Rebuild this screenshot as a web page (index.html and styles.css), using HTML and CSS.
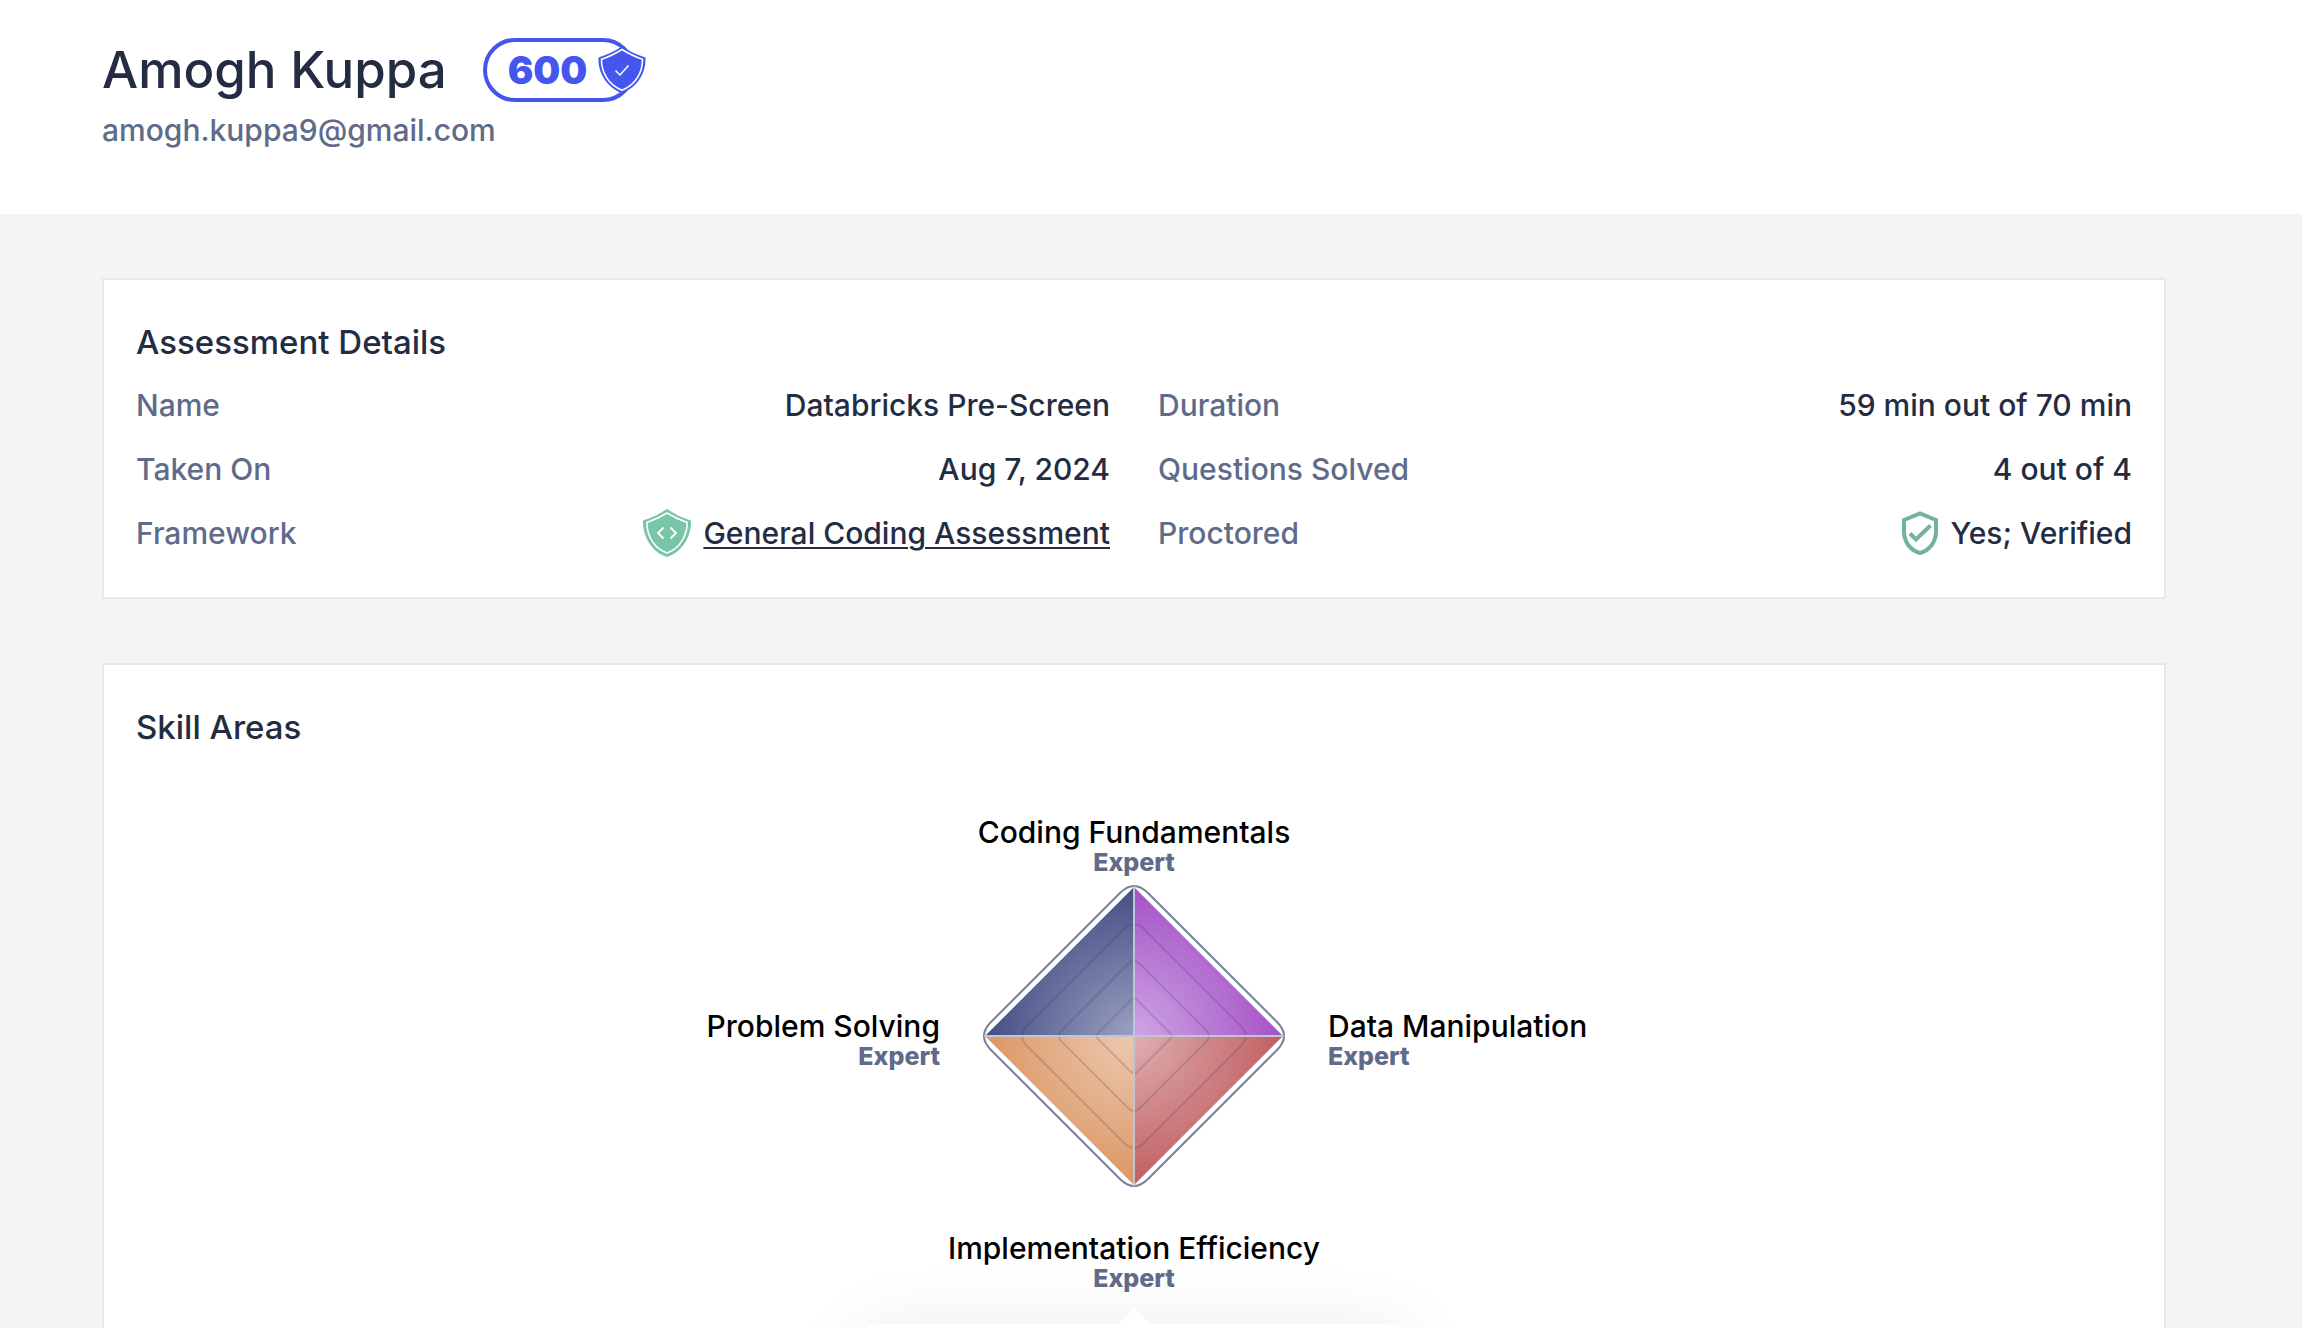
FILE: index.html
```html
<!DOCTYPE html>
<html lang="en">
<head>
<meta charset="utf-8">
<title>Amogh Kuppa - Assessment Result</title>
<link rel="stylesheet" href="styles.css">
</head>
<body>
<div class="page">
  <header class="profile">
    <div class="profile-row">
      <h1 class="profile-name">Amogh Kuppa</h1>
      <div class="score">
        <span class="score-value">600</span>
        <svg class="score-shield" viewBox="0 0 48 48" aria-hidden="true">
          <path d="M24 0.500C31 5 39 9 47.500 11.500C48.500 26 40 41 24 47.500C8 41 -0.500 26 0.500 11.500C9 9 17 5 24 0.500Z" fill="#4456ee"/>
          <path d="M24 3.500C30.500 7.500 37.500 11 44.500 13.300C44.700 26 38 38.500 24 44.300C10 38.500 3.300 26 3.500 13.300C10.500 11 17.500 7.500 24 3.500Z" fill="none" stroke="#fff" stroke-width="1.600"/>
          <path d="M17.500 24.500L22 29L30.500 19.500" fill="none" stroke="#fff" stroke-width="1.500"/>
        </svg>
      </div>
    </div>
    <p class="profile-email">amogh.kuppa9@gmail.com</p>
  </header>

  <main class="content">
    <section class="card">
      <h2 class="card-title">Assessment Details</h2>
      <dl class="details">
        <div class="detail"><dt>Name</dt><dd>Databricks Pre-Screen</dd></div>
        <div class="detail"><dt>Duration</dt><dd>59 min out of 70 min</dd></div>
        <div class="detail"><dt>Taken On</dt><dd>Aug 7, 2024</dd></div>
        <div class="detail"><dt>Questions Solved</dt><dd>4 out of 4</dd></div>
        <div class="detail">
          <dt>Framework</dt>
          <dd>
            <svg class="framework-icon" viewBox="0 0 48 48" aria-hidden="true">
              <path d="M24 0C31.500 5 39.500 9 48 11.500C48.500 28 39 43 24 48C9 43 -0.500 28 0 11.500C8.500 9 16.500 5 24 0Z" fill="#78c5a8"/>
              <path d="M24 4C30.500 8 37 11 44.200 13.500C44 27.500 36.500 39.500 24 44C11.500 39.500 4 27.500 3.800 13.500C11 11 17.500 8 24 4Z" fill="none" stroke="#fff" stroke-width="1.600"/>
              <path d="M20.500 18.500L15 24L20.500 29.500M27.500 18.500L33 24L27.500 29.500" fill="none" stroke="#fff" stroke-width="1.800"/>
            </svg>
            <a href="#framework">General Coding Assessment</a>
          </dd>
        </div>
        <div class="detail">
          <dt>Proctored</dt>
          <dd>
            <svg class="verified-icon" viewBox="0 0 36 44" aria-hidden="true">
              <path d="M18 2.300L34 9V20.500C34 31 27.500 39.500 18 42C8.500 39.500 2 31 2 20.500V9Z" fill="none" stroke="#74b39b" stroke-width="4"/>
              <path d="M8 22.500L14 28.500L28.500 14.500" fill="none" stroke="#74b39b" stroke-width="4"/>
            </svg>
            Yes; Verified
          </dd>
        </div>
      </dl>
    </section>

    <section class="card">
      <h2 class="card-title">Skill Areas</h2>
      <div class="skills">
        <div class="skill skill-top"><h3>Coding Fundamentals</h3><p>Expert</p></div>
        <div class="skill skill-left"><h3>Problem Solving</h3><p>Expert</p></div>
        <svg class="skill-chart" viewBox="-152 -152 304 304" role="img" aria-label="Skill levels">
          <defs>
            <radialGradient id="solving" gradientUnits="userSpaceOnUse" cx="0" cy="0" r="149"><stop offset="0" stop-color="#9ba1c0"/><stop offset="1" stop-color="#444e85"/></radialGradient>
            <radialGradient id="coding" gradientUnits="userSpaceOnUse" cx="0" cy="0" r="149"><stop offset="0" stop-color="#cfa5e4"/><stop offset="1" stop-color="#a352c6"/></radialGradient>
            <radialGradient id="efficiency" gradientUnits="userSpaceOnUse" cx="0" cy="0" r="149"><stop offset="0" stop-color="#ecc9b1"/><stop offset="1" stop-color="#dc9764"/></radialGradient>
            <radialGradient id="data" gradientUnits="userSpaceOnUse" cx="0" cy="0" r="149"><stop offset="0" stop-color="#dfafb1"/><stop offset="1" stop-color="#c15e61"/></radialGradient>
          </defs>
          <path d="M0 0V-149L-149 0Z" fill="url(#solving)"/>
          <path d="M0 0V-149L149 0Z" fill="url(#coding)"/>
          <path d="M0 0V149L-149 0Z" fill="url(#efficiency)"/>
          <path d="M0 0V149L149 0Z" fill="url(#data)"/>
          <g fill="none" stroke-width="2">
            <g stroke="#2d2f5e" stroke-opacity=".18">
              <path d="M-10 -107Q0 -117 10 -107L107 -10Q117 0 107 10L10 107Q0 117 -10 107L-107 10Q-117 0 -107 -10Z"/>
              <path d="M-7 -71Q0 -79 7 -71L71 -7Q79 0 71 7L7 71Q0 79 -7 71L-71 7Q-79 0 -71 -7Z"/>
              <path d="M-3 -36Q0 -39 3 -36L36 -3Q39 0 36 3L3 36Q0 39 -3 36L-36 3Q-39 0 -36 -3Z"/>
            </g>
            <path d="M-14 -143Q0 -157 14 -143L143 -14Q157 0 143 14L14 143Q0 157 -14 143L-143 14Q-157 0 -143 -14Z" stroke="#78829a"/>
            <path d="M-150 0H150M0 -150V150" stroke="#bfc5d2"/>
          </g>
        </svg>
        <div class="skill skill-right"><h3>Data Manipulation</h3><p>Expert</p></div>
        <div class="skill skill-bottom"><h3>Implementation Efficiency</h3><p>Expert</p>
          <div class="popover"></div>
        </div>
      </div>
    </section>
  </main>
</div>
</body>
</html>
```
FILE: styles.css
```css
* { box-sizing: border-box; }

body {
  margin: 0;
  background: #f3f4f6;
  color: #232c42;
  font: 500 30px/32px Inter, "Liberation Sans", sans-serif;
}

h1, h2, h3, p, dl, dd { margin: 0; font-weight: inherit; }

.page {
  height: 100vh;
  overflow: hidden;
}

.profile {
  padding: 38px 136px 68px 102px;
  background: #fff;
}

.profile-row {
  display: flex;
  align-items: center;
  gap: 36px;
}

.profile-name { font-size: 51px; line-height: 64px; }

.score {
  position: relative;
  width: 152px;
  height: 64px;
  padding-left: 21px;
  border: 4px solid #4456ee;
  border-radius: 32px;
  color: #4456ee;
  font-size: 38px;
  font-weight: 900;
  line-height: 56px;
}

.score-shield {
  position: absolute;
  top: 4px;
  right: -15px;
  width: 48px;
  height: 48px;
}

.profile-email {
  padding-top: 12px;
  color: #606b89;
}

.content {
  display: grid;
  gap: 64px;
  padding: 64px 136px 64px 102px;
}

.card {
  min-width: 0;
  padding: 32px;
  border: 2px solid #e6e8eb;
  background: #fff;
}

.card-title {
  font-size: 33px;
  line-height: 61px;
}

.details {
  display: grid;
  grid-template-columns: 1fr 1fr;
  column-gap: 48px;
}

.detail {
  display: flex;
  align-items: center;
  justify-content: space-between;
  height: 64px;
}

.detail dt { color: #606b89; }

.detail dd {
  display: flex;
  align-items: center;
  gap: 12px;
}

.detail a {
  color: inherit;
  text-decoration-thickness: 2px;
  text-underline-offset: 3px;
}

.framework-icon { width: 48px; height: 48px; }
.verified-icon { width: 36px; height: 44px; }

.skills {
  display: grid;
  grid-template-columns: 1fr 304px 1fr;
  grid-template-areas:
    "top top top"
    "left chart right"
    "bottom bottom bottom";
  align-items: center;
  column-gap: 42px;
  padding: 58px 0 64px;
}

.skill h3 {
  color: #000;
  font-size: 30px;
  line-height: 32px;
}

.skill p {
  color: #606b89;
  font-size: 25px;
  font-weight: 800;
  line-height: 28px;
}

.skill-top { grid-area: top; padding-bottom: 8px; text-align: center; }
.skill-left { grid-area: left; padding-top: 8px; text-align: right; }
.skill-right { grid-area: right; padding-top: 8px; }
.skill-chart { grid-area: chart; width: 304px; height: 304px; }

.skill-bottom {
  position: relative;
  grid-area: bottom;
  padding-top: 44px;
  text-align: center;
}

.popover {
  position: absolute;
  top: 100%;
  left: 50%;
  width: 536px;
  height: 320px;
  margin-top: 32px;
  border-radius: 8px;
  background: #fff;
  box-shadow: 0 16px 80px rgba(0, 0, 0, .12);
  transform: translateX(-50%);
}

.popover::before {
  content: "";
  position: absolute;
  top: -16px;
  left: 50%;
  border: 16px solid transparent;
  border-top: 0;
  border-bottom-color: #fff;
  transform: translateX(-50%);
}
```
